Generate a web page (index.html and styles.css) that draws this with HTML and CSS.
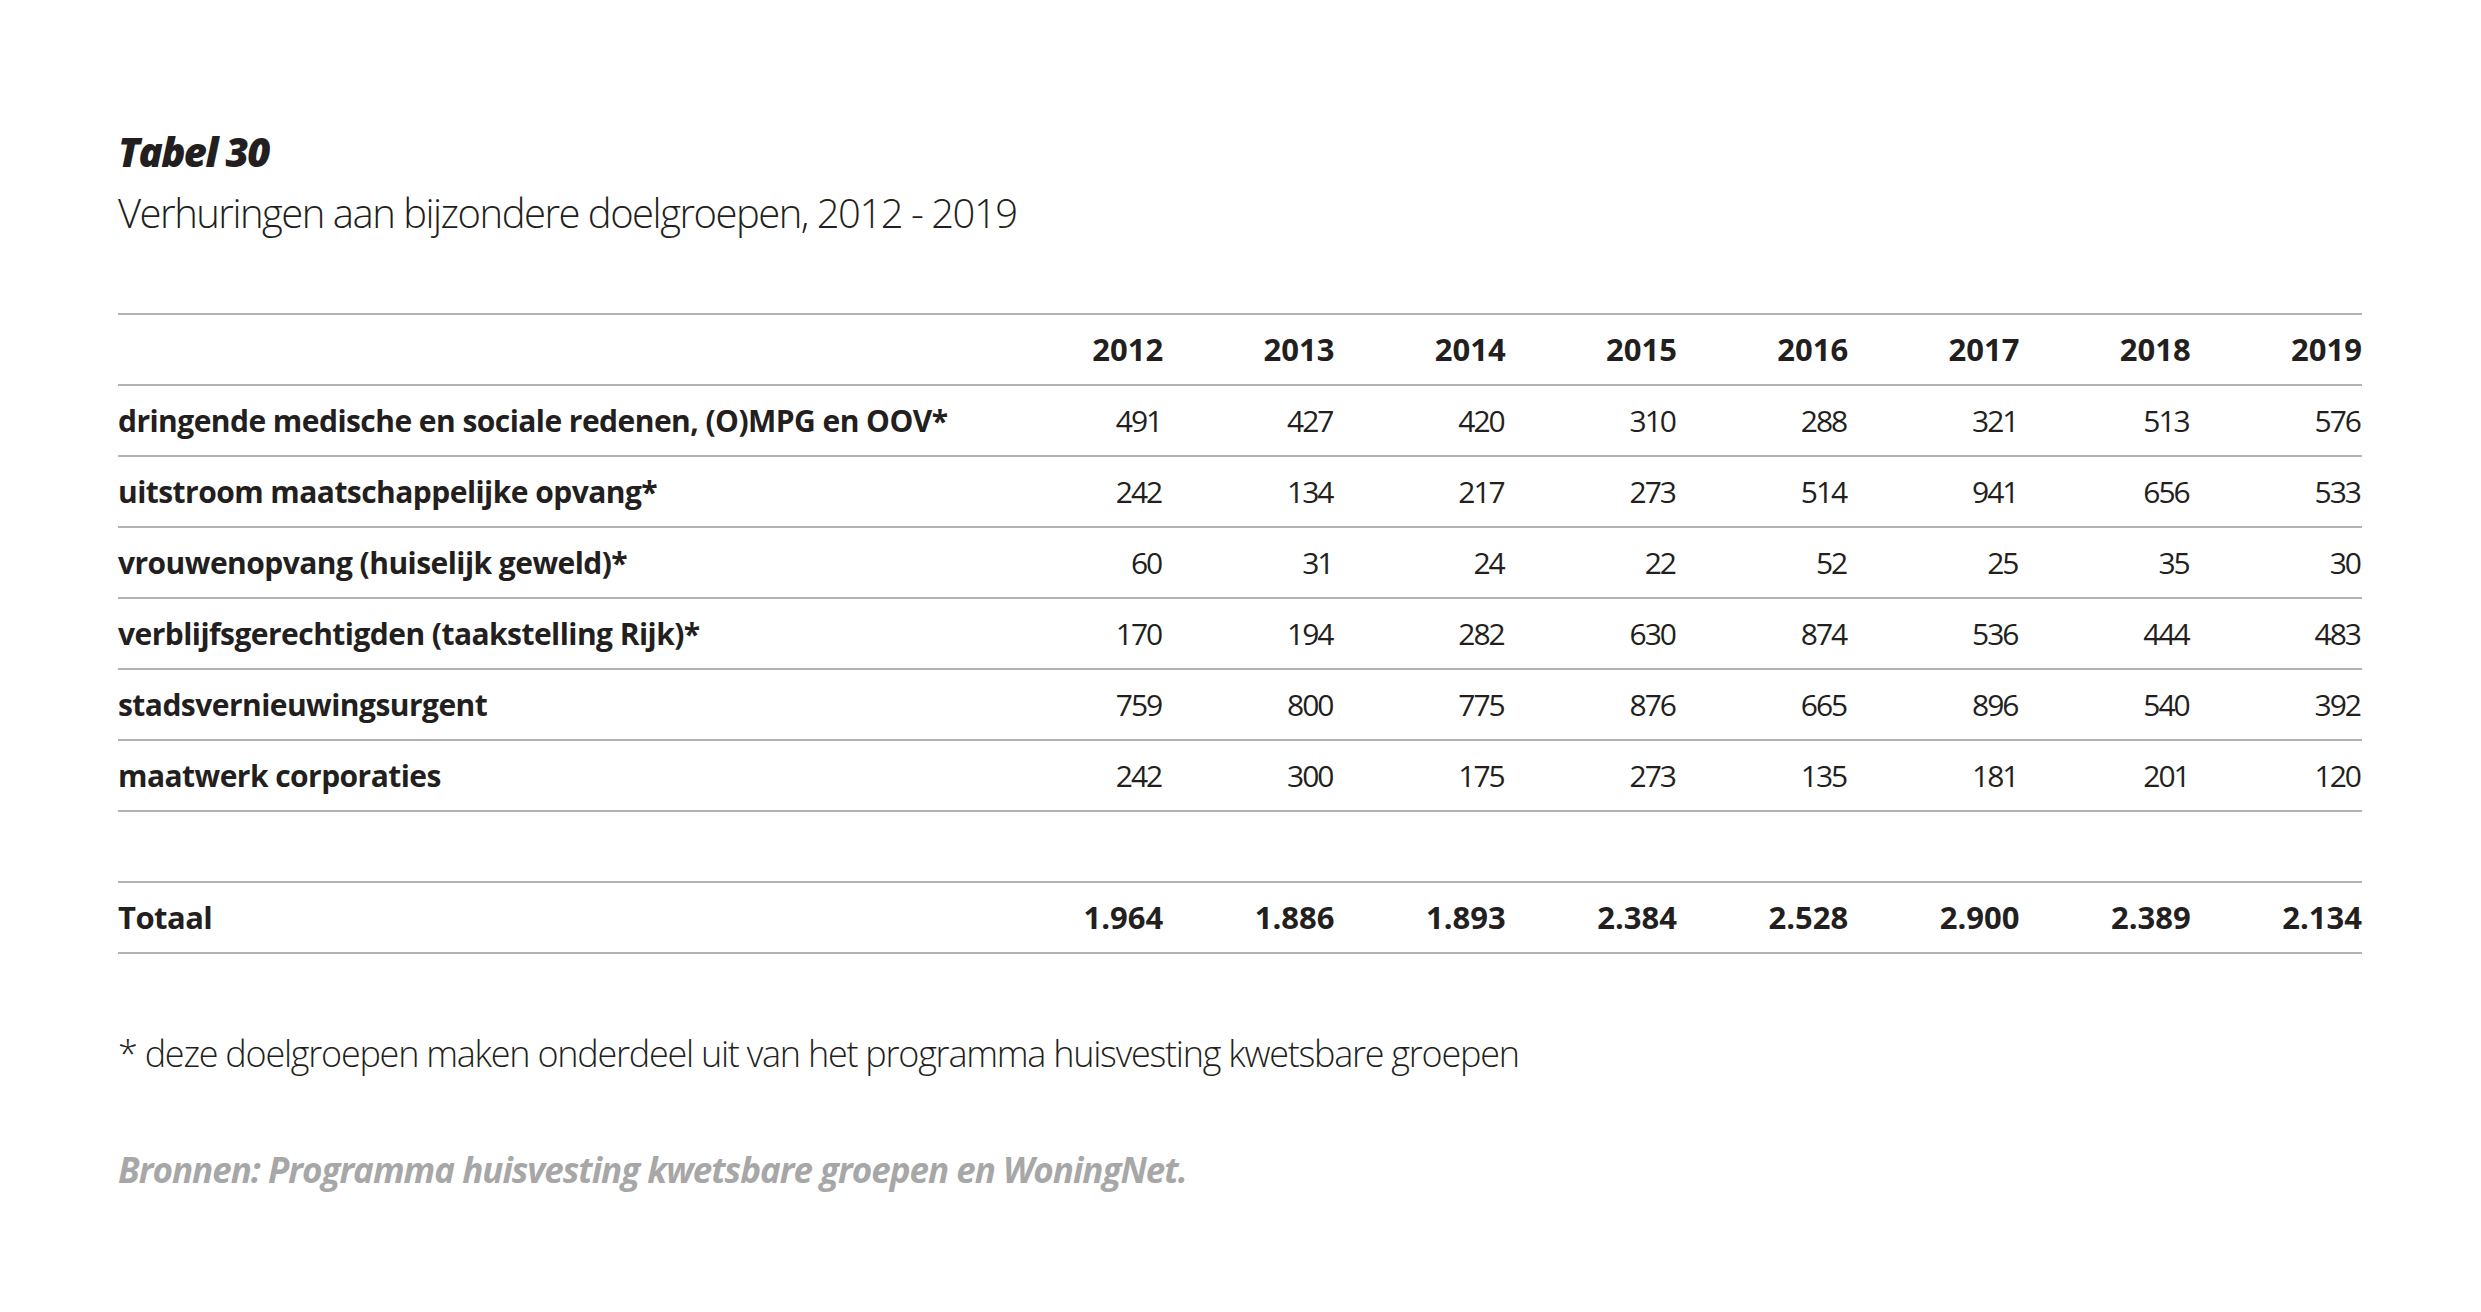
FILE: index.html
```html
<!DOCTYPE html>
<html lang="nl">
<head>
<meta charset="utf-8">
<title>Tabel 30</title>
<link rel="stylesheet" href="styles.css">
</head>
<body>
<main class="page">
  <h1 class="title">Tabel 30</h1>
  <p class="subtitle">Verhuringen aan bijzondere doelgroepen, 2012 - 2019</p>

  <div class="table">
    <div class="row head">
      <div class="label"></div>
      <div class="num">2012</div><div class="num">2013</div><div class="num">2014</div><div class="num">2015</div>
      <div class="num">2016</div><div class="num">2017</div><div class="num">2018</div><div class="num">2019</div>
    </div>
    <div class="row">
      <div class="label">dringende medische en sociale redenen, (O)MPG en OOV*</div>
      <div class="num">491</div><div class="num">427</div><div class="num">420</div><div class="num">310</div>
      <div class="num">288</div><div class="num">321</div><div class="num">513</div><div class="num">576</div>
    </div>
    <div class="row">
      <div class="label">uitstroom maatschappelijke opvang*</div>
      <div class="num">242</div><div class="num">134</div><div class="num">217</div><div class="num">273</div>
      <div class="num">514</div><div class="num">941</div><div class="num">656</div><div class="num">533</div>
    </div>
    <div class="row">
      <div class="label">vrouwenopvang (huiselijk geweld)*</div>
      <div class="num">60</div><div class="num">31</div><div class="num">24</div><div class="num">22</div>
      <div class="num">52</div><div class="num">25</div><div class="num">35</div><div class="num">30</div>
    </div>
    <div class="row">
      <div class="label">verblijfsgerechtigden (taakstelling Rijk)*</div>
      <div class="num">170</div><div class="num">194</div><div class="num">282</div><div class="num">630</div>
      <div class="num">874</div><div class="num">536</div><div class="num">444</div><div class="num">483</div>
    </div>
    <div class="row">
      <div class="label">stadsvernieuwingsurgent</div>
      <div class="num">759</div><div class="num">800</div><div class="num">775</div><div class="num">876</div>
      <div class="num">665</div><div class="num">896</div><div class="num">540</div><div class="num">392</div>
    </div>
    <div class="row">
      <div class="label">maatwerk corporaties</div>
      <div class="num">242</div><div class="num">300</div><div class="num">175</div><div class="num">273</div>
      <div class="num">135</div><div class="num">181</div><div class="num">201</div><div class="num">120</div>
    </div>
    <div class="spacer"></div>
    <div class="row total">
      <div class="label">Totaal</div>
      <div class="num">1.964</div><div class="num">1.886</div><div class="num">1.893</div><div class="num">2.384</div>
      <div class="num">2.528</div><div class="num">2.900</div><div class="num">2.389</div><div class="num">2.134</div>
    </div>
  </div>

  <p class="note">* deze doelgroepen maken onderdeel uit van het programma huisvesting kwetsbare groepen</p>
  <p class="source">Bronnen: Programma huisvesting kwetsbare groepen en WoningNet.</p>
</main>
</body>
</html>
```

FILE: styles.css
```css
html, body {
  margin: 0;
  padding: 0;
  background: #ffffff;
}

body {
  font-family: "Open Sans", "Noto Sans", "Liberation Sans", sans-serif;
  color: #231f20;
}

.page {
  width: 2244px;
  margin-left: 118px;
  padding-top: 128px;
}

.title {
  margin: 0;
  font-size: 40px;
  line-height: 48px;
  font-weight: 800;
  font-style: italic;
  letter-spacing: -1.6px;
}

.subtitle {
  margin: 12px 0 0;
  font-size: 40px;
  line-height: 50px;
  font-weight: 300;
  letter-spacing: -1.5px;
}

.table {
  margin-top: 75px;
  border-top: 2px solid #b3b3b3;
}

.row {
  display: grid;
  grid-template-columns: 874px repeat(8, 1fr);
  align-items: center;
  height: 69px;
  border-bottom: 2px solid #b3b3b3;
  font-size: 30px;
  line-height: 69px;
}

.label {
  font-weight: 700;
  white-space: nowrap;
  letter-spacing: -0.55px;
}

.num {
  text-align: right;
  font-weight: 400;
  letter-spacing: -2px;
  margin-right: 2px;
}

.head .num {
  font-size: 31px;
  font-weight: 700;
  letter-spacing: 0;
  margin-right: 0;
}

.total .label {
  font-size: 31px;
}

.total .num {
  font-size: 31px;
  font-weight: 700;
  letter-spacing: 0;
  margin-right: 0;
}

.spacer {
  height: 69px;
}

.total {
  border-top: 2px solid #b3b3b3;
}

.note {
  margin: 78px 0 0;
  font-size: 36px;
  line-height: 44px;
  font-weight: 300;
  letter-spacing: -1.25px;
}

.source {
  margin: 72px 0 0;
  font-size: 35px;
  line-height: 44px;
  font-weight: 700;
  font-style: italic;
  letter-spacing: -1px;
  color: #a7a7a7;
}
```
